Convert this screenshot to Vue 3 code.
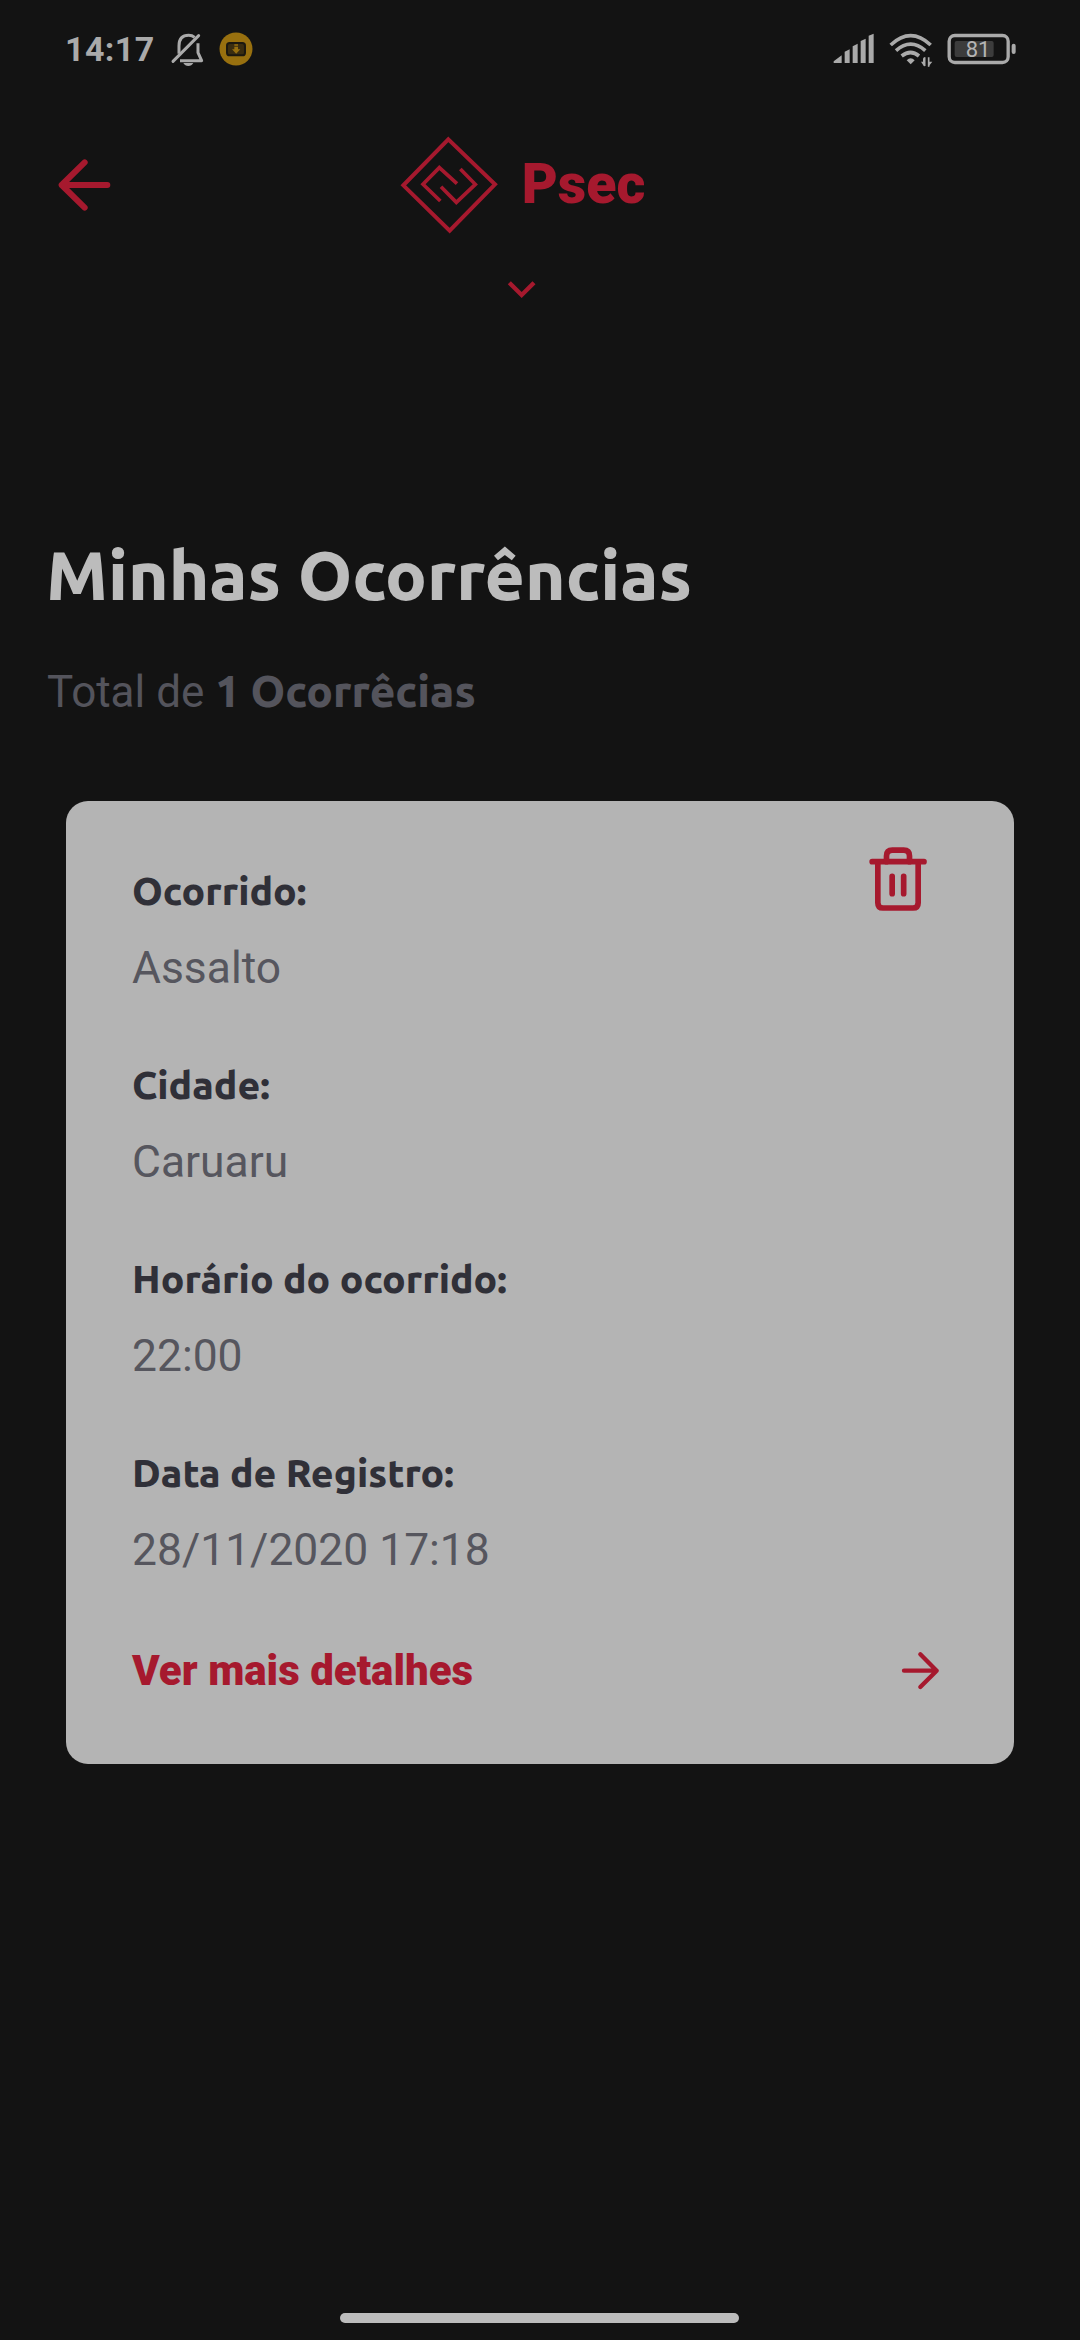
<script setup>
const fields = [
  { label: 'Ocorrido:', value: 'Assalto' },
  { label: 'Cidade:', value: 'Caruaru' },
  { label: 'Horário do ocorrido:', value: '22:00' },
  { label: 'Data de Registro:', value: '28/11/2020 17:18' },
]
</script>

<template>
  <div class="screen">
    <div class="status">
      <div class="status-left">
        <span class="clock">14:17</span>
        <svg class="bell" viewBox="390 66 104 106" fill="none" stroke="#aaaaaa">
          <path d="M417 131V108C417 86 428 76 446 76C453 76 459 78 464 82M474 100V128L485 152H420" stroke-width="9" stroke-linejoin="round" />
          <path d="M399 154L476 77" stroke-width="9" stroke-linecap="round" />
          <path d="M430 159H460Q455 168 445 168T430 159Z" fill="#aaaaaa" stroke="none" />
        </svg>
        <svg class="download" viewBox="534 66 108 106">
          <circle cx="588" cy="117" r="49.5" fill="#98700f" />
          <rect x="561" y="99" width="54" height="37" rx="8" fill="#3a2d10" stroke="#1b1810" stroke-width="6" />
          <path d="M583 103H594V107H583ZM583 110H594V118H601L588.500 131L576 118H583Z" fill="#98700f" />
        </svg>
      </div>
      <div class="status-right">
        <svg class="signal" viewBox="40 66 126 106" fill="#aaaaaa">
          <path d="M42 154L66 136V159H42ZM75 125L90 118V159H75ZM99 109L114 101V159H99ZM123 93L138 86V159H123ZM147 77L162 71V159H147Z" />
        </svg>
        <svg class="wifi" viewBox="208 66 132 106" fill="none" stroke="#aaaaaa" stroke-width="11">
          <path d="M213 105Q273 49 333 105M229 122Q273 83 317 122M246 138Q273 117 298 138" />
          <path d="M261 151Q273 139 285 151L273 163Z" fill="#aaaaaa" stroke="none" />
          <path d="M314 141V170L304 155H310V146ZM326 170V141V155H338Z" fill="#aaaaaa" stroke="none" />
          <path d="M315 142V168M327 142V170" stroke-width="5" />
        </svg>
        <svg class="battery" viewBox="382 66 208 106">
          <rect x="405" y="93" width="117" height="48" rx="6" fill="#3c3c3c" />
          <rect x="388.500" y="76.500" width="177" height="81" rx="17" fill="none" stroke="#aaaaaa" stroke-width="10" />
          <rect x="576" y="101" width="12" height="31" rx="6" fill="#aaaaaa" />
          <text x="438" y="140" fill="#b4b4b4" font-family="Roboto, sans-serif" font-size="66">81</text>
        </svg>
      </div>
    </div>

    <header class="header">
      <svg class="back" viewBox="50 114 164 162" fill="none" stroke="#a6192e" stroke-width="18" stroke-linecap="round" stroke-linejoin="round">
        <path d="M201 195H64M133 127L64 195L133 263" />
      </svg>
      <div class="brand">
        <svg class="logo" viewBox="56 44 300 300" fill="none" stroke="#a6192e" stroke-width="12">
          <path d="M204 57L344 192L208 331L69 195Z" />
          <path d="M230 190L177 142L128 192L180 242M240 146L285 192L228 246L182 199" stroke-width="11" />
        </svg>
        <span class="brand-name">Psec</span>
      </div>
    </header>
    <svg class="chevron" viewBox="380 480 88 60" fill="none" stroke="#a6192e" stroke-width="13">
      <path d="M387 488L424 525L461 488" />
    </svg>

    <h1 class="title">Minhas Ocorrências</h1>
    <p class="total">Total de <strong>1 Ocorrêcias</strong></p>

    <section class="card">
      <div class="card-main">
        <dl class="fields">
          <div v-for="f in fields" :key="f.label" class="field">
            <dt>{{ f.label }}</dt>
            <dd>{{ f.value }}</dd>
          </div>
        </dl>
        <svg class="trash" viewBox="140 195 186 204" fill="none" stroke="#a6192e" stroke-width="17" stroke-linecap="round" stroke-linejoin="round">
          <path d="M155.500 245H311M172.500 245V368Q172.500 384 188 384H278Q293.500 384 293.500 368V245" />
          <path d="M198.500 245V228Q198.500 210.500 216 210.500H250Q267.500 210.500 267.500 228V245" />
          <path d="M215.500 289V341M250 289V341" />
        </svg>
      </div>
      <div class="more">
        <span>Ver mais detalhes</span>
        <svg class="go" viewBox="120 92 126 124" fill="none" stroke="#a6192e" stroke-width="13" stroke-linecap="round" stroke-linejoin="round">
          <path d="M132 154H230M181 105L230 154L181 203" />
        </svg>
      </div>
    </section>

    <div class="home-bar"></div>
  </div>
</template>

<style>
body {
  background: #131313;
}
</style>

<style scoped>
.screen {
  box-sizing: border-box;
  width: 1080px;
  height: 2340px;
  display: flex;
  flex-direction: column;
  overflow: hidden;
  background: #131313;
  font-family: Roboto, sans-serif;
}
svg {
  display: block;
  flex: none;
}
.status {
  display: flex;
  justify-content: space-between;
  height: 36px;
  padding: 32px 63.33px 0 65px;
}
.status-left,
.status-right {
  display: flex;
}
.status-right {
  gap: 14px;
}
.status svg {
  height: 35.33px;
}
.clock {
  width: 105px;
  font-size: 34px;
  font-weight: 700;
  line-height: 35px;
  letter-spacing: 0.4px;
  color: #aaaaaa;
}
.bell { width: 34.67px; }
.download { width: 36px; margin-left: 13.33px; }
.signal { width: 42px; }
.wifi { width: 44px; }
.battery { width: 69.33px; }
.header {
  display: flex;
  align-items: center;
  height: 100px;
  margin-top: 66.67px;
  padding-left: 56.67px;
}
.back {
  width: 54.67px;
  height: 54px;
}
.brand {
  display: flex;
  align-items: center;
  margin-left: 287.33px;
}
.logo {
  width: 100px;
  height: 100px;
}
.brand-name {
  margin: 1px 0 0 23px;
  font-size: 55.5px;
  font-weight: 900;
  line-height: 64px;
  color: #a6192e;
}
.chevron {
  width: 29.33px;
  height: 20px;
  margin: 45px 0 0 506.67px;
}
.title {
  margin: 235px 0 0 46px;
  font-family: Ubuntu, "Noto Sans", sans-serif;
  font-size: 69.1px;
  font-weight: 800;
  line-height: 80px;
  white-space: nowrap;
  color: #bcbcbc;
}
.total {
  height: 60px;
  margin: 47px 0 0 47px;
  font-size: 44px;
  line-height: 60px;
  white-space: nowrap;
  color: #54545c;
}
.total strong {
  font-family: Ubuntu, "Noto Sans", sans-serif;
  font-weight: 800;
  line-height: 1;
}
.card {
  box-sizing: border-box;
  width: 948px;
  height: 963.5px;
  margin: 79.33px 0 0 66px;
  padding: 63px 66px 0;
  border-radius: 22px;
  background: #b4b4b4;
}
.card-main {
  display: flex;
  justify-content: space-between;
}
.fields {
  display: flex;
  flex-direction: column;
  gap: 60px;
  margin: 0;
}
.field {
  display: flex;
  flex-direction: column;
  gap: 20px;
}
dt {
  font-family: Ubuntu, "Noto Sans", sans-serif;
  font-size: 39.1px;
  font-weight: 800;
  line-height: 54px;
  white-space: nowrap;
  color: #303038;
}
dd {
  margin: 0;
  font-size: 44.4px;
  line-height: 60px;
  white-space: nowrap;
  color: #56565e;
}
.trash {
  width: 62px;
  height: 68px;
  margin: -19px 19.33px 0 0;
}
.more {
  display: flex;
  justify-content: space-between;
  align-items: center;
  height: 50px;
  margin-top: 66px;
  font-size: 42px;
  font-weight: 900;
  line-height: 50px;
  color: #a6192e;
}
.go {
  width: 42px;
  height: 41.33px;
  margin-right: 6px;
}
.home-bar {
  width: 399px;
  height: 10px;
  margin: auto auto 17px 340px;
  border-radius: 5px;
  background: #bcbcbc;
}
</style>
